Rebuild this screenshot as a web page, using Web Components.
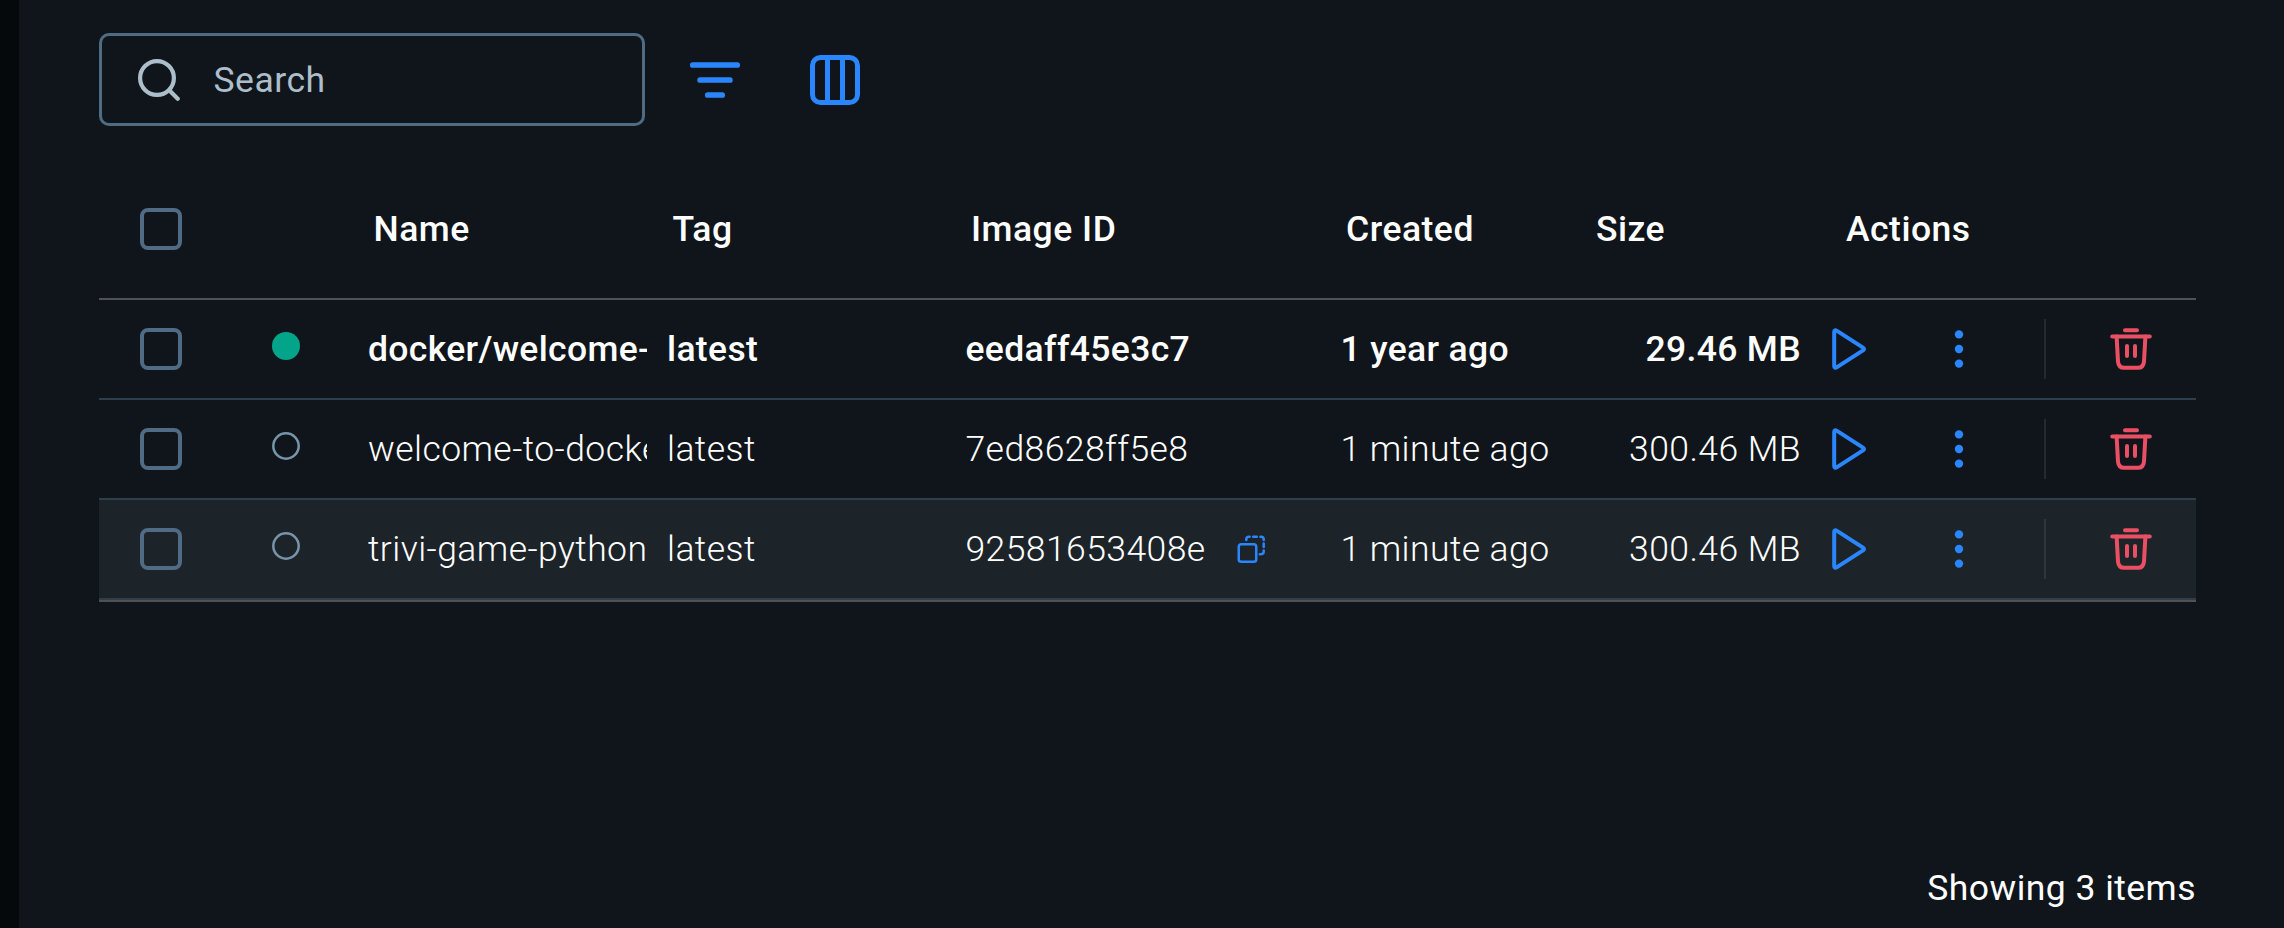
<!DOCTYPE html>
<html lang="en">
<head>
<meta charset="utf-8">
<title>Images</title>
<style>
html, body { margin: 0; height: 100%; background: #10151b; }
body { font-family: Roboto, "Liberation Sans", sans-serif; font-size: 35.5px; line-height: 41px; color: #fff; overflow: hidden; }
</style>
</head>
<body>
<images-page></images-page>
<script>
const define = (name, html, setup) => customElements.define(name, class extends HTMLElement {
  connectedCallback() {
    if (this.shadowRoot) return;
    const t = document.createElement('template');
    t.innerHTML = html;
    this.attachShadow({ mode: 'open' }).append(t.content.cloneNode(true));
    if (setup) setup(this, this.shadowRoot);
  }
});

const ICONS = {
  search: [42, 42, '<g fill="none" stroke="#adbecb" stroke-width="4.2" stroke-linecap="round"><circle cx="19" cy="19" r="16.9"/><path d="M31.5 31.5 39.7 39.7"/></g>'],
  filter: [50, 50, '<g fill="#2a86ff"><rect y="7.2" width="50" height="5.6" rx="2.6"/><rect x="7.3" y="22.2" width="35.4" height="5.6" rx="2.6"/><rect x="15" y="37.2" width="20" height="5.6" rx="2.6"/></g>'],
  columns: [50, 50, '<g fill="none" stroke="#2a86ff" stroke-width="5"><rect x="2.5" y="2.5" width="45" height="45" rx="8"/><path d="M17.5 3V47M32.5 3V47"/></g>'],
  play: [34, 42, '<path d="M2.2 4.1V37.9Q2.2 41 5 39.1L31 22.4Q33 21 31 19.6L5 2.9Q2.2 1 2.2 4.1Z" fill="none" stroke="#2a86ff" stroke-width="4" stroke-linejoin="round"/>'],
  more: [10, 40, '<g fill="#2a86ff"><circle cx="5" cy="5.4" r="4.2"/><circle cx="5" cy="20" r="4.2"/><circle cx="5" cy="34.6" r="4.2"/></g>'],
  trash: [42, 42, '<g fill="none" stroke="#e95064" stroke-width="4" stroke-linecap="round"><path d="M15 2.2H27M2.2 8.4H39.8M17 18V28M25 18V28"/><path d="M6.6 8.4 8 33.5Q8.5 39.8 14.2 39.8H27.8Q33.5 39.8 34 33.5L35.4 8.4"/></g>'],
  copy: [30, 30, '<g fill="none" stroke="#2a86ff" stroke-width="2.5"><rect x="1.75" y="9.25" width="17.5" height="17.5" rx="2.6"/><path d="M9.3 5V4.4Q9.3 1.8 11.9 1.8H12.6M16.2 1.8H19.8M23.4 1.8H24.1Q26.7 1.8 26.7 4.4V5M26.7 8.6V12M26.7 15.6V16.6Q26.7 19.2 24.1 19.2H22.8" stroke-linecap="round"/></g>'],
  running: [28, 28, '<circle cx="14" cy="14" r="14" fill="#03a58a"/>'],
  unused: [28, 28, '<circle cx="14" cy="14" r="12.7" fill="none" stroke="#7794ab" stroke-width="2.5"/>']
};

define('ui-icon', '<style>:host{display:block;flex:none}svg{display:block}</style>', (el, root) => {
  const [w, h, body] = ICONS[el.getAttribute('name')];
  root.innerHTML += `<svg width="${w}" height="${h}" viewBox="0 0 ${w} ${h}">${body}</svg>`;
});

define('ui-checkbox', `<style>:host{display:block;box-sizing:border-box;flex:none;width:42px;height:42px;border:4px solid #4f6c84;border-radius:8px;margin-left:41px}</style>`);

define('search-box', `<style>
:host{display:flex;align-items:center;box-sizing:border-box;width:546px;height:93px;border:3px solid #4f6c84;border-radius:10px;padding-left:36px;color:#adbecb;letter-spacing:.5px}
span{margin-left:33.5px;padding-top:2px}</style><ui-icon name="search"></ui-icon><span><slot></slot></span>`);

const GRID = 'display:grid;grid-template-columns:125px 125px 298.5px 298.5px 375px 250px 250px 375px;align-items:center;box-sizing:border-box;';

define('table-head', `<style>
:host{${GRID}height:140px;border-bottom:2px solid #515151;font-weight:500;letter-spacing:.5px}
span{padding-left:25px;white-space:nowrap}
.name{padding-left:24.5px}</style>
<ui-checkbox></ui-checkbox><i></i><span class="name">Name</span><span>Tag</span><span>Image ID</span><span>Created</span><span>Size</span><span>Actions</span>`);

define('row-actions', `<style>
:host{display:flex;align-items:center;height:60px;padding-left:11px}
.more{margin-left:88px}
hr{width:2px;height:60px;margin:0 64px 0 80px;border:0;background:rgba(255,255,255,.09)}</style>
<ui-icon name="play"></ui-icon><ui-icon class="more" name="more"></ui-icon><hr><ui-icon name="trash"></ui-icon>`);

define('image-row', `<style>
:host{${GRID}height:100px;border-bottom:2px solid #2d3f4d;font-weight:300;letter-spacing:.43px}
:host([running]){font-weight:500;letter-spacing:.34px}
:host([hovered]){background:#1c2329}
.status{padding:0 0 6px 48px}
.c{padding-left:19.5px;white-space:nowrap;overflow:hidden}
.name{padding-left:19px;margin-right:1px}
.id{display:flex;align-items:center}
.id ui-icon{margin-left:31px;margin-top:2px}
.size{text-align:right;padding:0 20px 0 0}</style>
<ui-checkbox></ui-checkbox><div class="status"></div>
<div class="c name"><slot></slot></div><div class="c tag"></div><div class="c id"><span></span></div><div class="c created"></div><div class="c size"></div><row-actions></row-actions>`,
(el, root) => {
  const icon = (sel, name) => {
    const i = document.createElement('ui-icon');
    i.setAttribute('name', name);
    root.querySelector(sel).append(i);
  };
  for (const k of ['tag', 'created', 'size']) root.querySelector('.' + k).textContent = el.getAttribute(k);
  root.querySelector('.id span').textContent = el.getAttribute('image-id');
  icon('.status', el.hasAttribute('running') ? 'running' : 'unused');
  if (el.hasAttribute('hovered')) icon('.id', 'copy');
});

define('images-page', `<style>
:host{display:flex;flex-direction:column;box-sizing:border-box;width:2284px;height:928px;border-left:19px solid #05090b;padding:33px 88px 0 80px}
.bar{display:flex;align-items:center}
.f{margin:1px 70px 0 45px}.k{margin-top:1px}
.table{margin-top:34px;border-bottom:2px solid #515151}
footer{margin:auto 0 19px;text-align:right;letter-spacing:.46px}</style>
<div class="bar"><search-box>Search</search-box><ui-icon class="f" name="filter"></ui-icon><ui-icon class="k" name="columns"></ui-icon></div>
<div class="table"><table-head></table-head>
<image-row running tag="latest" image-id="eedaff45e3c7" created="1 year ago" size="29.46 MB">docker/welcome-</image-row>
<image-row tag="latest" image-id="7ed8628ff5e8" created="1 minute ago" size="300.46 MB">welcome-to-docke</image-row>
<image-row hovered tag="latest" image-id="92581653408e" created="1 minute ago" size="300.46 MB">trivi-game-python</image-row></div>
<footer>Showing 3 items</footer>`);
</script>
</body>
</html>
